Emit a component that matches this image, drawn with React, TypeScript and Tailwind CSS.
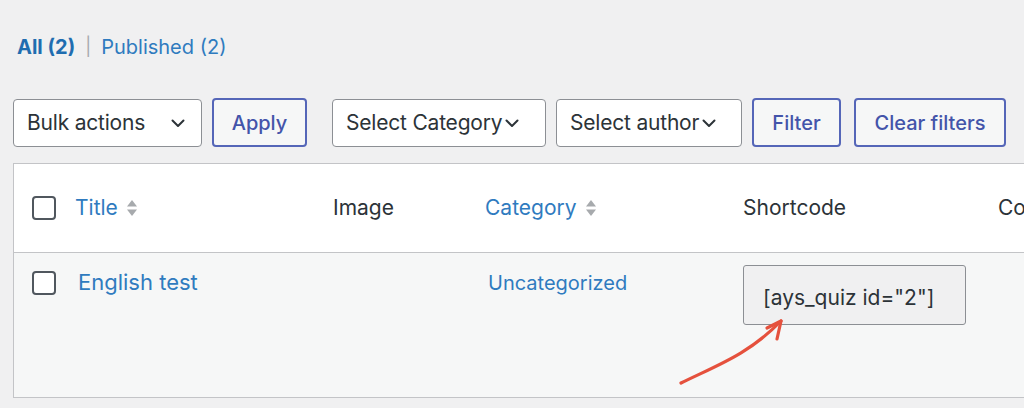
import { useState } from "react";

function Chevron({ className = "" }: { className?: string }) {
  return (
    <svg viewBox="0 0 14 9" className={className} fill="none">
      <path d="M1.5 1.5 7 7l5.5-5.5" stroke="#2c3338" strokeWidth="2" strokeLinecap="round" strokeLinejoin="round" />
    </svg>
  );
}

function SortArrows() {
  return (
    <svg viewBox="0 0 12 18" className="w-[12px] h-[18px] shrink-0">
      <path d="M6 1 11 7.5H1Z" fill="#a7aaad" />
      <path d="M6 17 11 10.5H1Z" fill="#a7aaad" />
    </svg>
  );
}

function Checkbox() {
  const [checked, setChecked] = useState(false);
  return (
    <button
      onClick={() => setChecked(!checked)}
      className="w-[24px] h-[24px] rounded-[4px] border-2 border-[#50575e] bg-white flex items-center justify-center"
    >
      {checked && (
        <svg viewBox="0 0 16 16" className="w-[16px] h-[16px]">
          <path d="M3 8.5 6.5 12 13 4" stroke="#2271b1" strokeWidth="2" fill="none" />
        </svg>
      )}
    </button>
  );
}

function Select({ label, width, spread }: { label: string; width: string; spread?: boolean }) {
  return (
    <div
      className={`${width} shrink-0 h-[48px] bg-white border border-[#8c8f94] rounded-[4px] flex items-center pl-[13px] text-[21px] tracking-[-0.2px] text-[#2c3338] ${
        spread ? "justify-between pr-[16px]" : "gap-[3px]"
      }`}
    >
      <span>{label}</span>
      <Chevron className="w-[14px] h-[9px] mt-[2px]" />
    </div>
  );
}

function OutlineButton({ label, width }: { label: string; width: string }) {
  return (
    <button
      className={`${width} shrink-0 h-[49px] bg-[#f6f7f7] border-2 border-[#5566b8] rounded-[4px] text-[20px] font-medium text-[#4354aa] flex items-center justify-center`}
    >
      {label}
    </button>
  );
}

export default function App() {
  return (
    <div
      className="relative w-[1024px] h-[408px] overflow-hidden bg-[#f0f0f1] text-[#2c3338]"
      style={{ fontFamily: "Inter, 'Liberation Sans', sans-serif" }}
    >
      {/* Status links */}
      <div className="pt-[35px] pl-[17px] flex items-center text-[20px] leading-[24px]">
        <a href="#" className="font-bold text-[#1f6db0]">All (2)</a>
        <span className="mx-[10px] text-[#a7aaad] text-[18px]">|</span>
        <a href="#" className="text-[#2f7bbf]">Published (2)</a>
      </div>

      {/* Toolbar */}
      <div className="mt-[39px] pl-[13px] flex items-center">
        <Select label="Bulk actions" width="w-[189px]" spread />
        <div className="ml-[10px]">
          <OutlineButton label="Apply" width="w-[95px]" />
        </div>
        <div className="ml-[25px] flex items-center gap-[10px]">
          <Select label="Select Category" width="w-[214px]" />
          <Select label="Select author" width="w-[186px]" />
          <OutlineButton label="Filter" width="w-[89px]" />
        </div>
        <div className="ml-[13px]">
          <OutlineButton label="Clear filters" width="w-[152px]" />
        </div>
      </div>

      {/* Table */}
      <div className="mt-[16px] ml-[13px] w-[1100px] border border-[#c3c4c7]">
        <div className="h-[89px] bg-white border-b border-[#c3c4c7] flex items-center text-[21px]">
          <div className="w-[61px] shrink-0 pl-[18px]">
            <Checkbox />
          </div>
          <div className="w-[258px] shrink-0 flex items-center gap-[8px] text-[#2f7bbf]">
            <span>Title</span>
            <SortArrows />
          </div>
          <div className="w-[152px] shrink-0 text-[#2c3338]">Image</div>
          <div className="w-[258px] shrink-0 flex items-center gap-[8px] text-[#2f7bbf]">
            <span>Category</span>
            <SortArrows />
          </div>
          <div className="w-[255px] shrink-0 text-[#2c3338]">Shortcode</div>
          <div className="shrink-0 text-[#2c3338]">Comments</div>
        </div>
        <div className="h-[144px] bg-[#f6f7f7] flex items-start">
          <div className="w-[61px] shrink-0 pl-[18px] pt-[18px]">
            <Checkbox />
          </div>
          <div className="w-[258px] shrink-0 pl-[3px] pt-[13px] text-[22px] text-[#2f7bbf]">English test</div>
          <div className="w-[152px] shrink-0" />
          <div className="w-[258px] shrink-0 pl-[3px] pt-[15px] text-[20px] text-[#2f7bbf]">Uncategorized</div>
          <div className="shrink-0 pt-[12px]">
            <div className="w-[223px] h-[60px] bg-[#f0f0f1] border border-[#8c8f94] rounded-[3px] flex items-center pl-[19px] pt-[6px] text-[21px] text-[#2c3338]">
              [ays_quiz id="2"]
            </div>
          </div>
        </div>
      </div>

      {/* Annotation arrow */}
      <svg className="absolute left-0 top-0 pointer-events-none" width="1024" height="408" viewBox="0 0 1024 408">
        <path
          d="M681 383 C 715 366, 748 355, 781 321"
          stroke="#e5513d"
          strokeWidth="3.2"
          fill="none"
          strokeLinecap="round"
        />
        <path
          d="M767 328 L781 321 L777 339"
          stroke="#e5513d"
          strokeWidth="3.2"
          fill="none"
          strokeLinecap="round"
          strokeLinejoin="round"
        />
      </svg>
    </div>
  );
}
